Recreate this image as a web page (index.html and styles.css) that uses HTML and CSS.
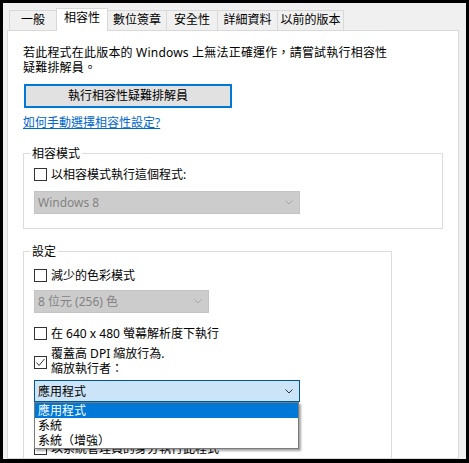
FILE: index.html
```html
<!DOCTYPE html>
<html lang="zh-Hant">
<head>
    <meta charset="UTF-8">
    <meta name="viewport" content="width=device-width, initial-scale=1.0">
    <title>相容性</title>
    <link rel="stylesheet" href="styles.css">
</head>
<body>

    <div class="window">
        <div class="tabs">
            <div class="tab w-2">一般</div>
            <div class="tab w-3 selected">相容性</div>
            <div class="tab w-4">數位簽章</div>
            <div class="tab w-3">安全性</div>
            <div class="tab w-4b">詳細資料</div>
            <div class="tab w-5">以前的版本</div>
        </div>

        <div class="panel">
            <p class="intro">若此程式在此版本的 Windows 上無法正確運作，請嘗試執行相容性<br>疑難排解員。</p>

            <button class="run-btn">執行相容性疑難排解員</button>

            <a href="#" class="help-link">如何手動選擇相容性設定?</a>

            <fieldset class="group group-mode">
                <legend>相容模式</legend>
                <label class="check-row">
                    <span class="box"></span>
                    <span>以相容模式執行這個程式:</span>
                </label>
                <div class="select disabled select-wide mode-select">
                    <span>Windows 8</span>
                    <svg class="chevron" width="8" height="5" viewBox="0 0 8 5"><polyline points="0.5,0.5 4,4 7.5,0.5" fill="none" stroke="#a8a8a8" stroke-width="1"/></svg>
                </div>
            </fieldset>

            <fieldset class="group group-settings">
                <legend>設定</legend>
                <label class="check-row">
                    <span class="box"></span>
                    <span>減少的色彩模式</span>
                </label>
                <div class="select disabled select-narrow color-select">
                    <span>8 位元 (256) 色</span>
                    <svg class="chevron" width="8" height="5" viewBox="0 0 8 5"><polyline points="0.5,0.5 4,4 7.5,0.5" fill="none" stroke="#a8a8a8" stroke-width="1"/></svg>
                </div>
                <label class="check-row row-640">
                    <span class="box"></span>
                    <span>在 640 x 480 螢幕解析度下執行</span>
                </label>
                <label class="check-row two-line">
                    <span class="box checked">
                        <svg width="11" height="11" viewBox="0 0 11 11"><polyline points="1.5,5.5 4,8.5 9.5,2" fill="none" stroke="#333" stroke-width="1"/></svg>
                    </span>
                    <span>覆蓋高 DPI 縮放行為.<br>縮放執行者：</span>
                </label>
                <div class="select-wrap">
                    <div class="select active select-wide">
                        <span>應用程式</span>
                        <svg class="chevron" width="8" height="5" viewBox="0 0 8 5"><polyline points="0.5,0.5 4,4 7.5,0.5" fill="none" stroke="#333" stroke-width="1"/></svg>
                    </div>
                    <ul class="options">
                        <li class="current">應用程式</li>
                        <li>系統</li>
                        <li>系統（增強）</li>
                    </ul>
                </div>
                <label class="check-row row-admin">
                    <span class="box"></span>
                    <span>以系統管理員的身分執行此程式</span>
                </label>
            </fieldset>
        </div>
    </div>

</body>
</html>
```

FILE: styles.css
```css
* {
    box-sizing: border-box;
}
body {
    margin: 0;
    background-color: #000;
    font-family: "Noto Sans", "Noto Sans CJK TC", sans-serif;
    font-size: 12px;
    line-height: 15px;
    color: #000;
    height: 463px;
    overflow: hidden;
}
.window {
    margin: 3px 3px 0 3px;
    height: 456px;
    background-color: #f0f0f0;
    overflow: hidden;
}

/* tabs */
.tabs {
    display: flex;
    align-items: flex-end;
    height: 27px;
    padding-left: 6px;
}
.tab {
    height: 20px;
    margin-right: -1px;
    border: 1px solid #d9d9d9;
    border-bottom: none;
    background-color: #f0f0f0;
    text-align: center;
    line-height: 18px;
}
.tab.selected {
    position: relative;
    z-index: 1;
    height: 23px;
    margin-bottom: -1px;
    background-color: #fff;
}
.w-2 { width: 48px; }
.w-3 { width: 52px; }
.w-4 { width: 60px; }
.w-4b { width: 61px; }
.w-5 { width: 67px; }

/* panel */
.panel {
    margin-left: 4px;
    width: 452px;
    height: 429px;
    border: 1px solid #d9d9d9;
    background-color: #fff;
    padding: 14px 15px 0 15px;
    overflow: hidden;
}
.intro {
    margin: 0;
    letter-spacing: 0.2px;
}
.run-btn {
    display: block;
    margin: 9px 0 0 1px;
    width: 208px;
    height: 24px;
    padding: 0;
    border: 2px solid #0078d7;
    background-color: #e1e1e1;
    font-family: inherit;
    font-size: 12px;
    line-height: 18px;
    color: #000;
}
.help-link {
    display: inline-block;
    margin-top: 7px;
    color: #0066cc;
    text-decoration: underline;
}

/* group boxes */
.group {
    margin: 0;
    border: 1px solid #dcdcdc;
    padding: 6px 10px 14px 10px;
    min-width: 0;
}
.group legend {
    margin-left: -4px;
    padding: 0 2px;
    line-height: 15px;
}
.group-mode {
    margin-top: 16px;
    width: 420px;
}
.group-settings {
    margin-top: 15px;
    width: 369px;
    padding-top: 9px;
    padding-bottom: 20px;
}

/* checkboxes */
.check-row {
    display: flex;
    align-items: center;
    gap: 4px;
    height: 15px;
}
.box {
    width: 13px;
    height: 13px;
    border: 1px solid #333;
    background-color: #fff;
    flex-shrink: 0;
}
.box svg {
    display: block;
}
.row-640 {
    margin-top: 13px;
}
.check-row.two-line {
    align-items: flex-start;
    height: 30px;
    margin-top: 5px;
}
.two-line .box {
    margin-top: 10px;
}
.row-admin {
    margin-top: 39px;
}

/* combo boxes */
.select {
    display: flex;
    align-items: center;
    justify-content: space-between;
    height: 23px;
    padding: 0 6px 0 3px;
    border: 1px solid #c4c4c4;
}
.select-wide {
    width: 266px;
}
.select-narrow {
    width: 175px;
}
.select.disabled {
    background-color: #cccccc;
    color: #838383;
}
.mode-select {
    margin-top: 9px;
}
.color-select {
    margin-top: 7px;
}
.select.active {
    height: 22px;
    background-color: #cce4f7;
    border-color: #005499;
}
.select-wrap {
    position: relative;
    margin-top: 4px;
    width: 266px;
}
.options {
    position: absolute;
    top: 100%;
    left: 0;
    z-index: 2;
    width: 265px;
    margin: 0;
    padding: 0;
    list-style: none;
    border: 1px solid #7a7a7a;
    background-color: #fff;
    box-shadow: 2px 2px 2px rgba(0, 0, 0, 0.35);
}
.options li {
    height: 15px;
    padding-left: 3px;
    line-height: 15px;
}
.options li.current {
    background-color: #0078d7;
    color: #fff;
}
```
